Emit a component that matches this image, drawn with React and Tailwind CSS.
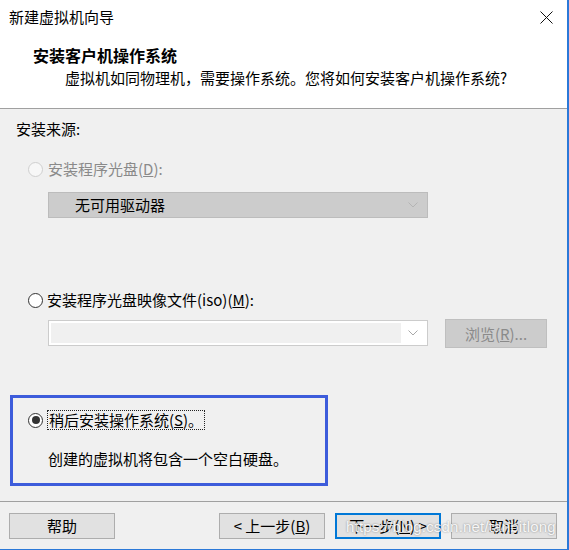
const font = "font-['Microsoft_YaHei','Noto_Sans_CJK_SC',sans-serif]";

function Chevron({ color = "#a8a8a8" }) {
  return (
    <svg width="10" height="6" viewBox="0 0 10 6" fill="none">
      <polyline points="0.5,0.5 5,5 9.5,0.5" stroke={color} strokeWidth="1" />
    </svg>
  );
}

function Radio({ checked, disabled }) {
  return (
    <span
      className={`w-[15px] h-[15px] rounded-full border flex items-center justify-center shrink-0 ${
        disabled ? "border-[#cfcfcf] bg-[#f7f7f7]" : "border-[#333333] bg-white"
      }`}
    >
      {checked && <span className="w-[8px] h-[8px] rounded-full bg-[#333333]" />}
    </span>
  );
}

function Btn({ children, primary }) {
  return (
    <button
      className={`w-[106px] h-[26px] bg-[#e1e1e1] flex items-center justify-center text-[15px] leading-[20px] ${
        primary ? "border-2 border-[#0078d7]" : "border border-[#adadad]"
      }`}
    >
      {children}
    </button>
  );
}

export default function App() {
  return (
    <div
      className={`${font} relative w-[569px] h-[550px] bg-[#f0f0f0] border-r-2 border-b border-[#2b79d8] flex flex-col text-[15px] leading-[20px] text-black overflow-hidden`}
    >
      {/* header */}
      <div className="h-[109px] bg-white border-b border-[#a0a0a0] shrink-0">
        <div className="h-[34px] flex items-center justify-between pl-[9px] pr-[14px]">
          <span>新建虚拟机向导</span>
          <svg width="13" height="13" viewBox="0 0 13 13">
            <path d="M0.5 0.5 L12.5 12.5 M12.5 0.5 L0.5 12.5" stroke="#111" strokeWidth="1" />
          </svg>
        </div>
        <div className="pl-[33px] pt-[11px] text-[16px] font-bold">安装客户机操作系统</div>
        <div className="pl-[65px] mt-[3px]">虚拟机如同物理机，需要操作系统。您将如何安装客户机操作系统?</div>
      </div>

      {/* body */}
      <div className="h-[392px] shrink-0 flex flex-col">
        <div className="pl-[16px] pt-[10px]">安装来源:</div>

        <div className="pl-[28px] mt-[20px] flex items-center gap-[5px] h-[20px] text-[#8a8a8a]">
          <Radio disabled />
          <span>
            安装程序光盘(<span className="underline">D</span>):
          </span>
        </div>

        <div className="ml-[48px] mt-[13px] w-[380px] h-[26px] bg-[#cccccc] border border-[#bcbcbc] flex items-center justify-between pl-[26px] pr-[9px]">
          <span>无可用驱动器</span>
          <Chevron color="#b4b4b4" />
        </div>

        <div className="pl-[28px] mt-[72px] flex items-center gap-[4px] h-[20px]">
          <Radio />
          <span>
            安装程序光盘映像文件(iso)(<span className="underline">M</span>):
          </span>
        </div>

        <div className="ml-[48px] mt-[10px] flex items-start">
          <div className="w-[380px] h-[26px] bg-white border border-[#cccccc] flex items-center p-[2px]">
            <div className="flex-1 h-full bg-[#f0f0f0]" />
            <div className="w-[24px] flex justify-center">
              <Chevron />
            </div>
          </div>
          <div className="ml-[17px] -mt-px w-[102px] h-[29px] bg-[#cccccc] border border-[#bfbfbf] flex items-center justify-center text-[#8a8a8a]">
            浏览(<span className="underline">R</span>)...
          </div>
        </div>

        <div className="ml-[10px] mt-[47px] w-[318px] h-[91px] border-[3px] border-[#3d5cdb] pl-[15px] pt-[12px]">
          <div className="flex items-center gap-[4px] h-[20px]">
            <Radio checked />
            <span className="border border-dotted border-[#222] px-px leading-[18px]">
              稍后安装操作系统(<span className="underline">S</span>)。
            </span>
          </div>
          <div className="pl-[20px] mt-[19px]">创建的虚拟机将包含一个空白硬盘。</div>
        </div>
      </div>

      {/* footer */}
      <div className="flex-1 border-t border-[#a0a0a0] pt-[11px] pl-[9px] pr-[10px] flex items-start">
        <Btn>帮助</Btn>
        <div className="ml-auto flex gap-[10px]">
          <Btn>
            &lt; 上一步(<span className="underline">B</span>)
          </Btn>
          <Btn primary>
            下一步(<span className="underline">N</span>) &gt;
          </Btn>
          <Btn>取消</Btn>
        </div>
      </div>

      {/* watermark */}
      <div className="absolute left-[346px] top-[516px] font-['Liberation_Sans',sans-serif] text-[15px] leading-[22px] tracking-[0.2px] text-white/90 [text-shadow:0_0_2px_rgba(0,0,0,0.45)] pointer-events-none">
        https://blog.csdn.net/tanbitlong
      </div>
    </div>
  );
}
